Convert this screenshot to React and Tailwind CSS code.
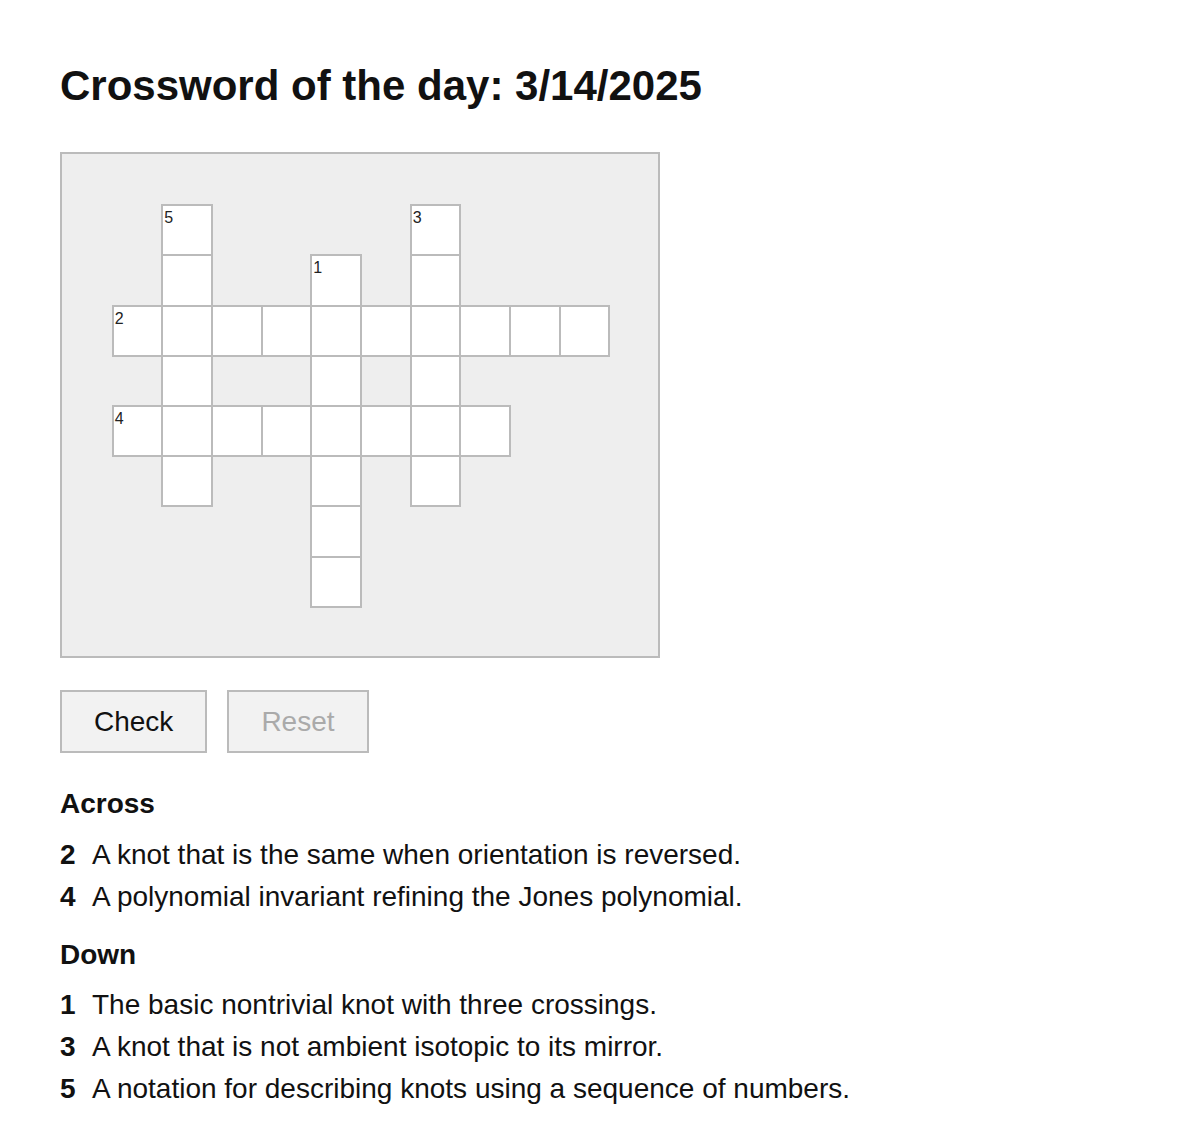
import React from "react";

const COL = ["", "col-start-1", "col-start-2", "col-start-3", "col-start-4", "col-start-5", "col-start-6", "col-start-7", "col-start-8", "col-start-9", "col-start-10", "col-start-11", "col-start-12"];
const ROW = ["", "row-start-1", "row-start-2", "row-start-3", "row-start-4", "row-start-5", "row-start-6", "row-start-7", "row-start-8", "row-start-9", "row-start-10"];

function buildCells() {
  const cells = [];
  const add = (c, r, label) => cells.push({ c, r, label });
  add(2, 1, "5");
  add(7, 1, "3");
  add(2, 2);
  add(5, 2, "1");
  add(7, 2);
  for (let c = 1; c <= 10; c++) add(c, 3, c === 1 ? "2" : undefined);
  add(2, 4);
  add(5, 4);
  add(7, 4);
  for (let c = 1; c <= 8; c++) add(c, 5, c === 1 ? "4" : undefined);
  add(2, 6);
  add(5, 6);
  add(7, 6);
  add(5, 7);
  add(5, 8);
  return cells;
}

const across = [
  ["2", "A knot that is the same when orientation is reversed."],
  ["4", "A polynomial invariant refining the Jones polynomial."],
];
const down = [
  ["1", "The basic nontrivial knot with three crossings."],
  ["3", "A knot that is not ambient isotopic to its mirror."],
  ["5", "A notation for describing knots using a sequence of numbers."],
];

function ClueList({ items }) {
  return (
    <ul className="text-[28px] leading-[42px]">
      {items.map(([n, t]) => (
        <li key={n} className="flex">
          <span className="font-bold w-[32px] shrink-0">{n}</span>
          <span>{t}</span>
        </li>
      ))}
    </ul>
  );
}

export default function App() {
  const cells = buildCells();
  return (
    <div
      className="bg-white text-[#111] px-[60px] pt-[62px] pb-[20px] min-h-[1130px]"
      style={{ fontFamily: '"Liberation Sans", Arial, sans-serif' }}
    >
      <h1 className="text-[42px] font-bold leading-[48px]">Crossword of the day: 3/14/2025</h1>

      <div className="mt-[42px] w-[600px] h-[506px] border-2 border-[#bbb] bg-[#eee]">
        <div className="grid grid-cols-12 grid-rows-10 w-full h-full">
          {cells.map((cell, i) => (
            <div
              key={i}
              className={`${COL[cell.c + 1]} ${ROW[cell.r + 1]} relative w-[calc(100%+2px)] h-[calc(100%+2px)] border-2 border-[#bbb] bg-white`}
            >
              {cell.label && (
                <span className="absolute top-0 left-[1px] text-[16px] leading-normal text-[#222]">{cell.label}</span>
              )}
            </div>
          ))}
        </div>
      </div>

      <div className="mt-[32px] flex gap-[20px]">
        <button className="bg-[#f2f2f2] border-2 border-[#bbb] px-[32px] py-[13px] text-[28px] leading-[33px] text-[#111]">
          Check
        </button>
        <button className="bg-[#f2f2f2] border-2 border-[#bbb] px-[32px] py-[13px] text-[28px] leading-[33px] text-[#aaa]" disabled>
          Reset
        </button>
      </div>

      <h2 className="mt-[35px] text-[28px] font-bold leading-[32px]">Across</h2>
      <div className="mt-[14px]">
        <ClueList items={across} />
      </div>
      <h2 className="mt-[21px] text-[28px] font-bold leading-[32px]">Down</h2>
      <div className="mt-[13px]">
        <ClueList items={down} />
      </div>
    </div>
  );
}
